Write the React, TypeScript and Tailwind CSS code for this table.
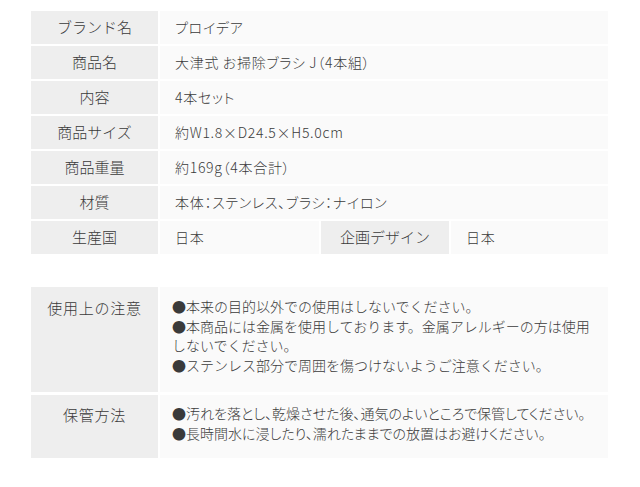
const font = "font-['Noto_Sans_CJK_JP',sans-serif]";

type Spec = { label: string; value: string };

const specs: Spec[] = [
  { label: 'ブランド名', value: 'プロイデア' },
  { label: '商品名', value: '大津式 お掃除ブラシ J（4本組）' },
  { label: '内容', value: '4本セット' },
  { label: '商品サイズ', value: '約W1.8×D24.5×H5.0cm' },
  { label: '商品重量', value: '約169g（4本合計）' },
  { label: '材質', value: '本体：ステンレス、ブラシ：ナイロン' },
];

const Label = ({ children, className = '' }: { children: React.ReactNode; className?: string }) => (
  <div className={`flex items-center justify-center bg-[#eeeeee] text-[15px] ${className}`}>{children}</div>
);

const Value = ({ children, className = '' }: { children: React.ReactNode; className?: string }) => (
  <div
    className={`flex items-center bg-[#fafafa] pl-[15px] text-[14px] tracking-[0.05em] [font-feature-settings:'palt'] ${className}`}>
    {children}
  </div>
);

export default function App() {
  return (
    <div className={`h-[487px] w-[640px] bg-white px-[31px] pt-[11px] font-light text-[#3a3a3a] ${font}`}>
      {/* Spec table */}
      <div className="flex w-[577px] flex-col gap-[2px]">
        {specs.map(s => (
          <div key={s.label} className="flex h-[33px] gap-[2px]">
            <Label className="w-[127px]">{s.label}</Label>
            <Value className="flex-1">{s.value}</Value>
          </div>
        ))}
        <div className="flex h-[33px] gap-[2px]">
          <Label className="w-[127px]">生産国</Label>
          <Value className="w-[159px]">日本</Value>
          <Label className="w-[128px]">企画デザイン</Label>
          <Value className="flex-1">日本</Value>
        </div>
      </div>

      {/* Notes table */}
      <div className="mt-[33px] flex w-[577px] flex-col gap-[3px]">
        <div className="flex h-[105px] gap-[2px]">
          <div className="flex w-[127px] justify-center bg-[#eeeeee] pt-[11px] text-[15px] leading-[20px] tracking-[0.05em]">
            使用上の注意
          </div>
          <div className="flex-1 bg-[#fafafa] pl-[12px] pt-[10px] text-[14px] leading-[19.5px]">
            <p>●本来の目的以外での使用はしないでください。</p>
            <p>●本商品には金属を使用しております。金属アレルギーの方は使用</p>
            <p>しないでください。</p>
            <p>●ステンレス部分で周囲を傷つけないようご注意ください。</p>
          </div>
        </div>
        <div className="flex h-[63px] gap-[2px]">
          <div className="flex w-[127px] justify-center bg-[#eeeeee] pt-[10px] text-[15px] leading-[20px] tracking-[0.05em]">
            保管方法
          </div>
          <div className="flex-1 bg-[#fafafa] pl-[12px] pt-[9px] text-[14px] leading-[19.5px] [font-feature-settings:'palt']">
            <p className="whitespace-nowrap">●汚れを落とし、乾燥させた後、通気のよいところで保管してください。</p>
            <p className="whitespace-nowrap">●長時間水に浸したり、濡れたままでの放置はお避けください。</p>
          </div>
        </div>
      </div>
    </div>
  );
}
